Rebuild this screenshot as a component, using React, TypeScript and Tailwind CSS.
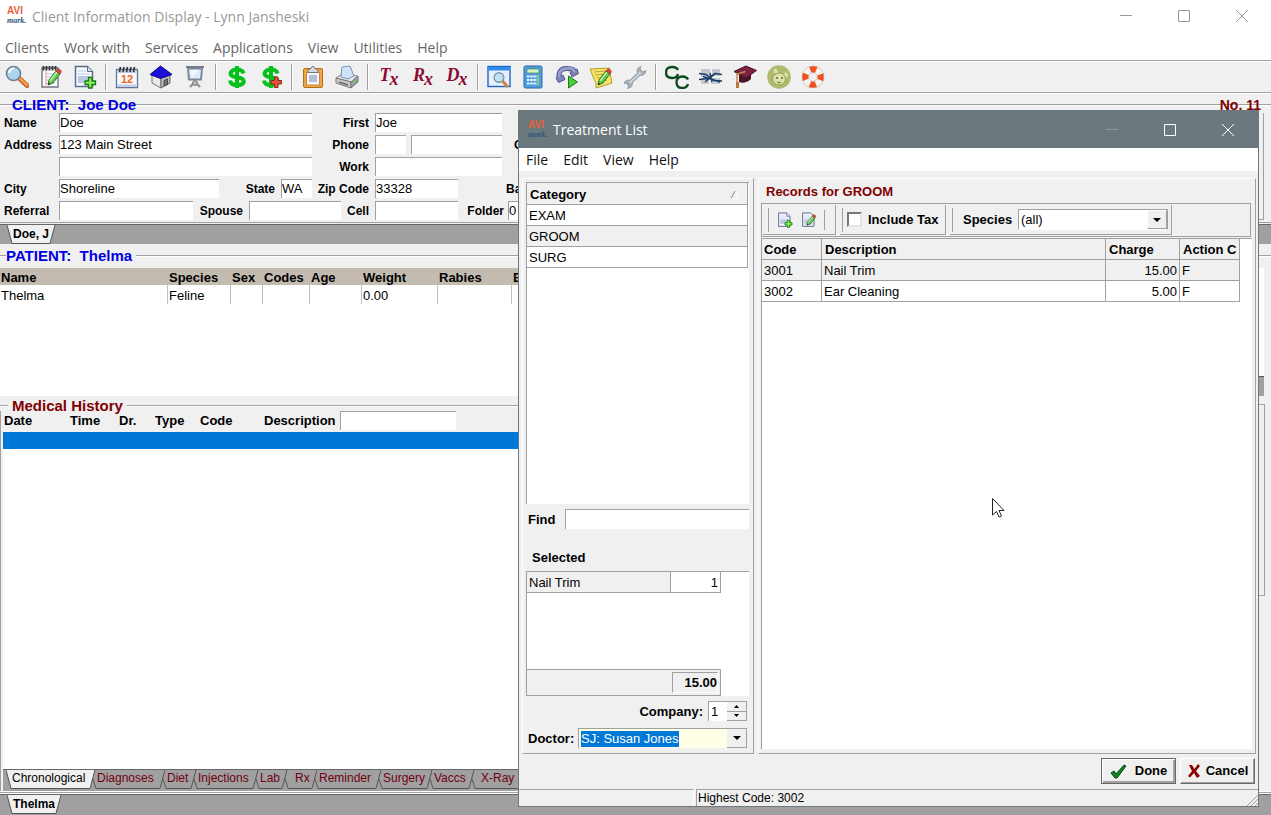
import React from 'react';

const UI = "font-['Open_Sans','Noto_Sans',sans-serif]";
const SUNKEN = 'border-t border-l border-[#a0a0a0] bg-white';
const CELL = 'border-r border-b border-[#a0a0a0] p-0 pt-[2px] leading-[18px]';

const CLIENT_MENU = ['Clients', 'Work with', 'Services', 'Applications', 'View', 'Utilities', 'Help'];
const LIST_MENU = ['File', 'Edit', 'View', 'Help'];

const HISTORY_TABS = [
  { label: 'Diagnoses', width: 'w-[62px]' },
  { label: 'Diet', width: 'w-[23px]' },
  { label: 'Injections', width: 'w-[54px]' },
  { label: 'Lab', width: 'w-[21px]' },
  { label: 'Rx', width: 'w-[22px] pl-[6px]' },
  { label: 'Reminder', width: 'w-[56px]' },
  { label: 'Surgery', width: 'w-[43px]' },
  { label: 'Vaccs', width: 'w-[34px]' },
  { label: 'X-Ray', width: 'w-[48px] pl-[5px]' },
];

const PATIENT_COLUMNS = [
  { head: 'Name', value: 'Thelma', width: 'w-[168px]' },
  { head: 'Species', value: 'Feline', width: 'w-[63px]' },
  { head: 'Sex', value: '', width: 'w-[32px]' },
  { head: 'Codes', value: '', width: 'w-[47px]' },
  { head: 'Age', value: '', width: 'w-[52px]' },
  { head: 'Weight', value: '0.00', width: 'w-[76px]' },
  { head: 'Rabies', value: '', width: 'w-[74px]' },
  { head: 'E', value: '', width: '' },
];

const RECORDS = [
  { code: '3001', description: 'Nail Trim', charge: '15.00', action: 'F' },
  { code: '3002', description: 'Ear Cleaning', charge: '5.00', action: 'F' },
];

const Svg = ({ children, size = 24 }: { children: React.ReactNode; size?: number }) => (
  <svg width={size} height={size} viewBox="0 0 24 24" fill="none" aria-hidden="true" className="shrink-0">
    {children}
  </svg>
);

const Pencil = () => (
  <g>
    <path d="M9 20l1-5 7-9 4 3-7 9z" fill="#63c84a" stroke="#2c7a26" />
    <path d="M11 16l7-9" stroke="#c6f3b0" strokeWidth="1.4" />
    <path d="M17 6l1.500-1.800q3-.8 3.800 2.500L21 9z" fill="#e0453a" stroke="#a52a22" strokeWidth=".7" />
    <path d="M9 20l.5-2.500 2 1.500z" fill="#333" />
  </g>
);

const SearchIcon = () => (
  <Svg>
    <path d="M15 14l7 6.500" stroke="#b8632a" strokeWidth="5" strokeLinecap="round" />
    <path d="M15.500 14l6.500 6" stroke="#f79a4b" strokeWidth="3" strokeLinecap="round" />
    <circle cx="8.500" cy="8.500" r="7" fill="#a9d5ee" stroke="#6b8296" strokeWidth="1.600" />
    <path d="M4 8q1-4.500 5-4.500" stroke="#fff" strokeWidth="2" />
  </Svg>
);

const NotepadIcon = () => (
  <Svg>
    <path d="M3 3h16v19H3z" fill="#fdfdfd" stroke="#6f7484" strokeWidth="1.400" />
    <path d="M6 9h10M6 12h10M6 15h10M6 18h10" stroke="#b9c3e0" />
    <path d="M7 5v17" stroke="#f0a0a0" />
    <path d="M4.500 5.500V1M7.500 5.500V1M10.500 5.500V1M13.500 5.500V1M16.500 5.500V1" stroke="#333" strokeWidth="1.800" />
    <Pencil />
  </Svg>
);

const PageAddIcon = ({ size }: { size?: number }) => (
  <Svg size={size}>
    <path d="M2.500 1.500h12l5 5v15h-17z" fill="#f4f7fc" stroke="#5c6c8a" strokeWidth="1.500" />
    <path d="M14.500 1.500v5h5" fill="#d4dfef" stroke="#5c6c8a" />
    <path d="M5 6h8M5 9h11" stroke="#c2cee2" />
    <path d="M5 11h12v7H5z" fill="#b9c9e4" />
    <path d="M15.500 12.500h3.500v3.500h3.500v3.500H19V23h-3.500v-3.500H12V16h3.500z" fill="#8ef25c" stroke="#157a15" strokeWidth="1.300" />
  </Svg>
);

const PageEditIcon = ({ size }: { size?: number }) => (
  <Svg size={size}>
    <path d="M2.500 1.500h12l5 5v15h-17z" fill="#f4f7fc" stroke="#5c6c8a" strokeWidth="1.500" />
    <path d="M5 6h8M5 9h11" stroke="#c2cee2" />
    <path d="M5 11h12v8H5z" fill="#b9c9e4" />
    <Pencil />
  </Svg>
);

const CalendarIcon = () => (
  <Svg>
    <path d="M1.500 4.500h21v18h-21z" fill="#f7f9fd" stroke="#6672a0" strokeWidth="1.300" />
    <path d="M2 5h20v3H2z" fill="#c4cde4" />
    <path d="M3 20.500h18" stroke="#c4cde4" strokeWidth="2" />
    <path d="M4.500 7l1-5M8 7l1-5M11.500 7l1-5M15 7l1-5M18.500 7l1-5" stroke="#333" strokeWidth="1.700" />
    <text x="12" y="18" textAnchor="middle" fontFamily="Liberation Sans" fontWeight="700" fontSize="11" fill="#f0651c">12</text>
  </Svg>
);

const HouseIcon = () => (
  <Svg>
    <path d="M3 9l9 3v11l-9-5z" fill="#e9e9e9" stroke="#777" />
    <path d="M21 9l-9 3v11l9-5z" fill="#bdbdbd" stroke="#666" />
    <path d="M11.500 1L1 9.500l10.500 4L23 9.500z" fill="#1c10d8" stroke="#0d0784" />
    <path d="M15 15.500l3.500-1.700v5.700L15 21z" fill="#777" stroke="#333" strokeWidth=".8" />
  </Svg>
);

const BoardIcon = () => (
  <Svg>
    <path d="M7 22l5-5 5 5" stroke="#8d9299" strokeWidth="2.400" />
    <path d="M4 2.500h16l-1 13H5z" fill="#7f8899" />
    <path d="M6 4.500h12l-1 9H7z" fill="#dcebfb" />
    <path d="M7 5h9l-7 7z" fill="#f4f9ff" />
    <path d="M3 2h18" stroke="#777d88" strokeWidth="2" />
    <circle cx="12" cy="18" r="2.400" fill="#b6bac2" stroke="#777" />
  </Svg>
);

const DollarShape = () => (
  <path d="M18.500 8.500Q17.500 4.500 12 4.500T5.500 8.500Q5.500 11.500 12 12.300T18.800 16.500Q18.500 20 12 20T5 15.500M12 1v22" stroke="#06c01c" strokeWidth="4" />
);

const DollarIcon = () => (
  <Svg><DollarShape /></Svg>
);

const DollarAddIcon = () => (
  <Svg>
    <DollarShape />
    <path d="M15.500 12h3.500v3.500h3.500V19H19v3.500h-3.500V19H12v-3.500h3.500z" fill="#e3553d" stroke="#8e2415" />
  </Svg>
);

const ClipboardIcon = () => (
  <Svg>
    <rect x="2.500" y="3.500" width="19" height="19" rx="1.500" fill="#f2a444" stroke="#b06f1c" />
    <path d="M5.500 7.500h13v12.500h-13z" fill="#f4f6fb" stroke="#c98b3c" />
    <path d="M8 10h8v7H8z" fill="#b4bedb" />
    <path d="M7 7.500V5l3-1.500q2-4.500 4 0L17 5v2.500z" fill="#d5d8dd" stroke="#777" />
  </Svg>
);

const PrinterIcon = () => (
  <Svg>
    <path d="M1 13l6-4 16 2-7 6z" fill="#e8e8e8" stroke="#8a8a8a" />
    <path d="M6 12L7 2l8-1 4 10-6 3z" fill="#cfe3f8" stroke="#7f93ae" />
    <path d="M1 13v5l15 5v-6z" fill="#c9cbce" stroke="#777" />
    <path d="M16 17v6l7-6v-6z" fill="#9b9ea2" stroke="#777" />
    <path d="M4 17l9 3" stroke="#666" strokeWidth="1.500" />
    <circle cx="19" cy="16" r="1" fill="#5fdc3c" />
  </Svg>
);

const WindowSearchIcon = () => (
  <Svg>
    <rect x="1" y="1.500" width="22" height="20" fill="#e7f1fd" stroke="#1b66c8" strokeWidth="1.400" />
    <path d="M1.500 2h21v3.500h-21z" fill="#3189ea" />
    <path d="M15.500 16l4.500 5" stroke="#d97f2f" strokeWidth="3" strokeLinecap="round" />
    <circle cx="12" cy="12.500" r="4.800" fill="#bfe2f3" stroke="#7d95a6" strokeWidth="1.400" />
  </Svg>
);

const CalculatorIcon = () => (
  <Svg>
    <rect x="3" y="1" width="18" height="22" rx="1.500" fill="#4f9de0" stroke="#2867a8" />
    <path d="M6 4h12v4H6z" fill="#d8f5c0" stroke="#4d8f60" strokeWidth=".8" />
    <path d="M6 11.500h12M6 15h12M6 18.500h12" stroke="#f3f8fd" strokeWidth="2.200" strokeDasharray="2.400 .8" />
    <path d="M16 10.500h2v9h-2z" fill="#75d06c" />
  </Svg>
);

const PhoneIcon = () => (
  <Svg>
    <path d="M4 13Q3 4 11 3.500t9 4" stroke="#51578a" strokeWidth="5" />
    <path d="M1 13l7-3 2 4.500-6.500 3zM15 7.500l7-3.500 1.500 4.500L17 12z" fill="#7e84b8" stroke="#51578a" />
    <path d="M4 12.500Q3 4.500 11 3.500t8 3.500" stroke="#9aa0d0" strokeWidth="3" />
    <path d="M13.500 11l9 6-9 6z" fill="#4cd03a" stroke="#1c7a1b" />
  </Svg>
);

const NoteIcon = () => (
  <Svg>
    <path d="M1 4l19-1 3 15-16 5q1-5-2-9z" fill="#f8e568" stroke="#b89b2b" />
    <path d="M5 7l12-1M6 10l11-1M8 13l10-1M9 17l9-2" stroke="#b39a33" strokeWidth=".9" />
    <Pencil />
  </Svg>
);

const WrenchIcon = () => (
  <Svg>
    <path d="M4.500 20L19 6" stroke="#8e97a5" strokeWidth="4" />
    <path d="M23 5.500l-3.500 1.500L17 5l1-3.500q-4 .5-4 5.500l3.500 3.500q5 0 5.500-5zM1 18.500l3.500-.5L6 20l-1.500 3.500Q9.500 23 9.500 18L6.500 15q-5 0-5.500 3.500z" fill="#a9b1bd" stroke="#8e97a5" strokeWidth=".8" />
    <path d="M6.500 18L17.500 7.500" stroke="#cdd3db" strokeWidth="2.200" />
  </Svg>
);

const CreditIcon = () => (
  <Svg>
    <g stroke="#0d4a22" strokeWidth="2.400">
      <path d="M13 5Q11.500 2 7.500 2 1 2 1 7.500T7.500 13q4.500 0 5.500-4" />
      <path d="M23 14.500q-1.500-3-5.500-3-6 0-6 5.800T17.500 23q4.500 0 5.500-4" />
    </g>
  </Svg>
);

const LinkIcon = () => (
  <Svg>
    <path d="M2 4h9v8H2zM13 4h8v7h-8zM2 13h8v6H2zM12 13h9v6h-9z" fill="#c3c7cf" />
    <path d="M0 8.500l7 1 8 6 8 .5M0 14.500l9-1 7-5 7 1M4 11.500l17 5.500M6 17l11-9M11 8l2 9" stroke="#173c66" strokeWidth="1.400" />
  </Svg>
);

const CapIcon = () => (
  <Svg>
    <path d="M6 10v7q6 2.500 12-3V8z" fill="#4c1428" />
    <path d="M1 6.500L13 1l10.500 4.500L13 13z" fill="#7d2342" stroke="#4a1226" />
    <path d="M12.500 6.500L4 9v13" stroke="#c08a4a" strokeWidth="1.400" />
    <path d="M3 17h3v6H3z" fill="#b9793d" />
  </Svg>
);

const PuppyIcon = () => (
  <Svg>
    <circle cx="12" cy="12" r="11.800" fill="#aebb6c" />
    <path d="M7 8q-1-4 1-4.500T11 8M17 8q4-2 4 3l-2 2" fill="#dde0a8" />
    <ellipse cx="12" cy="14" rx="6.500" ry="6" fill="#dde0a8" stroke="#95a254" />
    <circle cx="10" cy="13" r="1" fill="#66702f" />
    <circle cx="15" cy="13" r="1" fill="#66702f" />
    <path d="M10 17q2 1.500 4 0" stroke="#66702f" />
  </Svg>
);

const LifebuoyIcon = () => (
  <Svg>
    <circle cx="12" cy="12" r="7.700" stroke="#f6f3f0" strokeWidth="6.500" />
    <circle cx="12" cy="12" r="7.700" stroke="#f0521f" strokeWidth="6.500" strokeDasharray="6.047 6.047" strokeDashoffset="3" />
    <circle cx="12" cy="12" r="11" stroke="#c9a79a" strokeWidth=".6" />
    <circle cx="12" cy="12" r="4.400" stroke="#c9a79a" strokeWidth=".6" />
  </Svg>
);

const Script = ({ letter }: { letter: string }) => (
  <span className="flex items-start font-['Liberation_Serif',serif] font-bold italic text-[#8b0a32]">
    <span className="text-[18px] leading-[20px]">{letter}</span>
    <span className="-ml-px pt-1 text-[18px] leading-[20px]">x</span>
  </span>
);

const TOOLBAR = [
  [
    { name: 'Find client', icon: <SearchIcon /> },
    { name: 'Edit notes', icon: <NotepadIcon /> },
    { name: 'New client', icon: <PageAddIcon /> },
  ],
  [
    { name: 'Appointments', icon: <CalendarIcon /> },
    { name: 'Boarding', icon: <HouseIcon /> },
    { name: 'Whiteboard', icon: <BoardIcon /> },
  ],
  [
    { name: 'Accounting', icon: <DollarIcon /> },
    { name: 'Add payment', icon: <DollarAddIcon /> },
  ],
  [
    { name: 'Clipboard', icon: <ClipboardIcon /> },
    { name: 'Print', icon: <PrinterIcon /> },
  ],
  [
    { name: 'Treatments', icon: <Script letter="T" /> },
    { name: 'Prescriptions', icon: <Script letter="R" /> },
    { name: 'Diagnoses', icon: <Script letter="D" /> },
  ],
  [
    { name: 'Information search', icon: <WindowSearchIcon /> },
    { name: 'Calculator', icon: <CalculatorIcon /> },
    { name: 'Call', icon: <PhoneIcon /> },
    { name: 'Memo', icon: <NoteIcon /> },
    { name: 'Setup', icon: <WrenchIcon /> },
  ],
  [
    { name: 'Credit card', icon: <CreditIcon /> },
    { name: 'Links', icon: <LinkIcon /> },
    { name: 'Training', icon: <CapIcon /> },
    { name: 'Pet portal', icon: <PuppyIcon /> },
    { name: 'Support', icon: <LifebuoyIcon /> },
  ],
];

const Logo = () => (
  <svg width="20" height="20" viewBox="0 0 20 20" aria-hidden="true" className="shrink-0">
    <text x="0" y="8" fontFamily="Liberation Sans" fontWeight="700" fontSize="10" fill="#e8623c">AVI</text>
    <text x="0" y="17" fontFamily="Liberation Serif" fontWeight="700" fontStyle="italic" fontSize="8" fill="#2d5578">mark.</text>
  </svg>
);

const WindowButtons = ({ minimize }: { minimize: string }) => (
  <div className="flex h-full">
    <button aria-label="Minimize" className={`flex w-[58px] items-center justify-center ${minimize}`}>
      <svg width="12" height="12" stroke="currentColor"><path d="M0 5.500h12" /></svg>
    </button>
    <button aria-label="Maximize" className="flex w-[58px] items-center justify-center">
      <svg width="12" height="12" stroke="currentColor" fill="none"><path d="M.5.500h11v11H.5z" /></svg>
    </button>
    <button aria-label="Close" className="flex w-[58px] items-center justify-center">
      <svg width="12" height="12" stroke="currentColor"><path d="M0 0l12 12M12 0L0 12" /></svg>
    </button>
  </div>
);

type FieldProps = { id: string; label: string; labelWidth: string; width: string; value?: string };

const Field = ({ id, label, labelWidth, width, value = '' }: FieldProps) => (
  <>
    <label htmlFor={id} className={`shrink-0 text-[12px] font-bold whitespace-nowrap ${labelWidth}`}>{label}</label>
    <input id={id} defaultValue={value} className={`h-[19px] shrink-0 text-[13px] ${SUNKEN} ${width}`} />
  </>
);

const Legend = ({ title, color, right }: { title: string; color: string; right?: string }) => (
  <div className="grid h-4 items-center">
    <div className="col-start-1 row-start-1 h-[2px] border-t border-[#a0a0a0] bg-white" />
    <div className="col-start-1 row-start-1 flex justify-between pr-[10px] pl-3 text-[15px] leading-4 font-bold">
      <h2 className={`whitespace-pre ${color}`}>{title}</h2>
      {right && <span className="text-[14px] text-[#800000]">{right}</span>}
    </div>
  </div>
);

// Slanted edges of the notebook tabs
const TabLeft = () => (
  <svg width="6" height="19" className="shrink-0" fill="none">
    <path d="M0 0l5 18h1V0z" fill="#f0f0f0" />
    <path d="M0 0l5 18.500h1" stroke="#555" />
  </svg>
);

const TabRight = ({ filled, last }: { filled?: boolean; last?: boolean }) => (
  <svg width="8" height="19" className="shrink-0" fill="none">
    {filled && <path d="M0 0h6L1 18H0z" fill="#f0f0f0" />}
    <path d="M0 18.500h1L6 0" stroke="#555" />
    {!last && <path d="M4 9l3 9.500h1" stroke="#555" />}
  </svg>
);

const SingleTab = ({ label, className }: { label: string; className: string }) => (
  <div className={`flex border-t border-[#666] bg-[#a0a0a0] pl-[7px] ${className}`}>
    <TabLeft />
    <button className="h-[19px] border-b border-[#555] bg-[#f0f0f0] text-[12px] leading-[17px] font-bold">{label}</button>
    <TabRight filled last />
  </div>
);

const DownArrow = () => (
  <svg width="8" height="4" aria-hidden="true"><path d="M0 0h8L4 4z" fill="#000" /></svg>
);

const ClientPanel = () => (
  <section className="border-t border-white pt-[3px]">
    <Legend title="CLIENT:  Joe Doe" color="text-[#0000e0]" right="No. 11" />
    <div className="flex justify-between border-b border-[#a0a0a0] pr-[7px] pb-[2px]">
      <form className="flex flex-col gap-[3px] pl-1">
        <div className="flex items-center">
          <Field id="name" label="Name" labelWidth="w-[55px]" width="w-[253px]" value="Doe" />
          <Field id="first" label="First" labelWidth="w-[63px] pr-[6px] text-right" width="w-[127px]" value="Joe" />
        </div>
        <div className="flex items-center">
          <Field id="address" label="Address" labelWidth="w-[55px]" width="w-[253px]" value="123 Main Street" />
          <Field id="area" label="Phone" labelWidth="w-[63px] pr-[6px] text-right" width="w-[31px]" />
          <input aria-label="Phone number" className={`ml-[5px] h-[19px] w-[91px] ${SUNKEN}`} />
          <span className="pl-3 text-[12px] font-bold">C</span>
        </div>
        <div className="flex items-center">
          <Field id="address2" label="" labelWidth="w-[55px]" width="w-[253px]" />
          <Field id="work" label="Work" labelWidth="w-[63px] pr-[6px] text-right" width="w-[127px]" />
        </div>
        <div className="flex items-center">
          <Field id="city" label="City" labelWidth="w-[55px]" width="w-[160px]" value="Shoreline" />
          <Field id="state" label="State" labelWidth="w-[62px] pr-[6px] text-right" width="w-[31px]" value="WA" />
          <Field id="zip" label="Zip Code" labelWidth="w-[63px] pr-[6px] text-right" width="w-[83px]" value="33328" />
          <span className="pl-12 text-[12px] font-bold">Ba</span>
        </div>
        <div className="flex items-center">
          <Field id="referral" label="Referral" labelWidth="w-[55px]" width="w-[134px]" />
          <Field id="spouse" label="Spouse" labelWidth="w-[56px] pr-[6px] text-right" width="w-[92px]" />
          <Field id="cell" label="Cell" labelWidth="w-[34px] pr-[6px] text-right" width="w-[83px]" />
          <Field id="folder" label="Folder" labelWidth="w-[50px] pr-[4px] text-right" width="w-[60px]" value="0" />
        </div>
      </form>
      <div className="w-[300px] border-r border-b border-[#a0a0a0]" />
    </div>
    <SingleTab label="Doe, J" className="mt-px h-5" />
  </section>
);

const PatientPanel = () => (
  <section>
    <div className="flex h-6 items-center text-[15px] leading-6 font-bold">
      <div className="h-[2px] w-[6px] border-t border-[#a0a0a0] bg-white" />
      <h2 className="pr-1 whitespace-pre text-[#0000e0]">PATIENT:  Thelma</h2>
      <div className="h-[2px] flex-1 border-t border-[#a0a0a0] bg-white" />
    </div>
    <div className="mr-[7px] flex h-32 bg-white">
      <div className="flex-1">
        <table className="w-full table-fixed border-separate border-spacing-0 text-left text-[13px]">
          <thead>
            <tr className="h-[17px] bg-[#c4bbb0]">
              {PATIENT_COLUMNS.map((col) => (
                <th key={col.head} className={`p-0 pt-[2px] pl-px leading-[15px] ${col.width}`}>{col.head}</th>
              ))}
            </tr>
          </thead>
          <tbody>
            <tr className="h-[19px]">
              {PATIENT_COLUMNS.map((col) => (
                <td key={col.head} className="border-r border-[#c0c0c0] p-0 pt-[2px] pl-px leading-[17px] last:border-r-0">{col.value}</td>
              ))}
            </tr>
          </tbody>
        </table>
      </div>
      <div className="flex w-[300px] flex-col">
        <div className="flex-1" />
        <div className="h-5 border-t border-[#555] bg-[#a0a0a0]" />
      </div>
    </div>
  </section>
);

const HistoryPanel = () => (
  <section className="flex flex-1 gap-3 pt-1 pr-[6px]">
    <div className="flex flex-1 flex-col">
      <div className="flex h-[11px] items-center text-[15px] leading-3 font-bold">
        <div className="h-[2px] w-2 border-t border-[#a0a0a0] bg-white" />
        <h2 className="px-1 text-[#800000]">Medical History</h2>
        <div className="h-[2px] flex-1 border-t border-[#a0a0a0] bg-white" />
      </div>
      <div className="flex flex-1 flex-col border-l border-[#a0a0a0] pl-[2px]">
        <div className="flex h-[19px] items-center text-[13px] font-bold">
          <span className="w-[66px] pl-px">Date</span>
          <span className="w-[49px] pl-px">Time</span>
          <span className="w-[37px] pl-px">Dr.</span>
          <span className="w-[45px]">Type</span>
          <span className="w-[64px]">Code</span>
          <label htmlFor="history-description" className="w-[76px]">Description</label>
          <input id="history-description" className={`h-[19px] w-[116px] ${SUNKEN}`} />
        </div>
        <div className="mt-[2px] h-[17px] bg-[#0078d7]" />
        <div className="flex-1 bg-white" />
        <div className="flex h-[22px] overflow-hidden border-t border-[#666] bg-[#a0a0a0] pl-[3px] text-[12px]">
          <TabLeft />
          <button className="flex h-[19px] w-[77px] shrink-0 border-b border-[#555] bg-[#f0f0f0] leading-4 whitespace-nowrap">
            Chronological
          </button>
          <TabRight filled />
          {HISTORY_TABS.map((tab) => (
            <React.Fragment key={tab.label}>
              <button className={`flex h-[19px] shrink-0 border-b border-[#555] leading-4 whitespace-nowrap text-[#700010] ${tab.width}`}>
                {tab.label}
              </button>
              <TabRight />
            </React.Fragment>
          ))}
        </div>
      </div>
    </div>
    <div className="mt-1 h-[192px] w-[300px] border border-[#a0a0a0]" />
  </section>
);

const CategoryPanel = () => (
  <div className="flex w-[232px] shrink-0 flex-col border border-t-white border-r-[#a0a0a0] border-b-[#a0a0a0] border-l-white pt-[3px] pr-1 pl-[3px]">
    <div className={`flex-1 ${SUNKEN}`}>
      <table className="w-[221px] border-separate border-spacing-0 text-left text-[13px]">
        <thead>
          <tr className="h-[22px] bg-[#f0f0f0]">
            <th className={CELL}>
              <span className="flex items-center justify-between pr-2 pl-[3px]">
                Category
                <svg width="8" height="8" aria-hidden="true" fill="none">
                  <path d="M4.500 0L8 7.500H0" stroke="#fff" />
                  <path d="M0 7.500L4 0" stroke="#888" />
                </svg>
              </span>
            </th>
          </tr>
        </thead>
        <tbody>
          {['EXAM', 'GROOM', 'SURG'].map((name) => (
            <tr key={name} className="h-[21px] even:bg-[#f0f0f0]">
              <td className={`pl-[2px] ${CELL}`}>{name}</td>
            </tr>
          ))}
        </tbody>
      </table>
    </div>
    <div className="mt-[5px] flex h-5 items-center text-[13px] leading-[18px] font-bold">
      <label htmlFor="find" className="w-[39px] pt-[2px] pl-[2px]">Find</label>
      <input id="find" className={`h-5 min-w-0 flex-1 ${SUNKEN}`} />
    </div>
    <h3 className="mt-4 h-[26px] pl-[6px] text-[13px] leading-[26px] font-bold">Selected</h3>
    <div className={`flex h-[125px] flex-col items-start text-[13px] ${SUNKEN}`}>
      <table className="w-[194px] border-separate border-spacing-0">
        <tbody>
          <tr className="h-[21px]">
            <td className={`bg-[#f0f0f0] pl-[2px] ${CELL}`}>Nail Trim</td>
            <td className={`w-[50px] pr-[2px] text-right ${CELL}`}>1</td>
          </tr>
        </tbody>
      </table>
      <div className="mt-auto flex h-[27px] w-[194px] justify-end border-t border-r border-b border-[#a0a0a0] bg-[#f0f0f0] p-[2px]">
        <output className="w-[46px] border border-t-[#a0a0a0] border-r-white border-b-white border-l-[#a0a0a0] text-right leading-5 font-bold">15.00</output>
      </div>
    </div>
    <div className="mt-[5px] mr-[2px] flex h-5 items-center justify-end text-[13px] leading-[18px]">
      <label htmlFor="company" className="pt-px pr-[5px] font-bold">Company:</label>
      <input id="company" defaultValue="1" className={`h-5 w-[19px] pl-[2px] ${SUNKEN}`} />
      <div className="flex h-5 w-5 flex-col border-t border-[#a0a0a0]">
        <button aria-label="Increase" className="flex flex-1 items-center justify-center border-r border-b border-[#a0a0a0]">
          <svg width="5" height="3"><path d="M0 3h5L2.500 0z" fill="#000" /></svg>
        </button>
        <button aria-label="Decrease" className="flex flex-1 items-center justify-center border-r border-b border-[#a0a0a0]">
          <svg width="5" height="3"><path d="M0 0h5L2.500 3z" fill="#000" /></svg>
        </button>
      </div>
    </div>
    <div className="mt-[7px] mr-[2px] mb-[5px] flex h-5 items-center text-[13px] leading-[18px]">
      <label htmlFor="doctor" className="w-[52px] pt-px pl-[2px] font-bold whitespace-nowrap">Doctor:</label>
      <div className="flex h-5 flex-1 items-center justify-between border-t border-l border-[#a0a0a0] bg-[#ffffe6] pl-[2px]">
        <select id="doctor" className="h-4 appearance-none bg-[#0078d7] leading-4 text-white">
          <option>SJ: Susan Jones</option>
        </select>
        <span className="flex h-full w-5 items-center justify-center border-r border-b border-[#a0a0a0] bg-[#f0f0f0]"><DownArrow /></span>
      </div>
    </div>
  </div>
);

const RecordsPanel = () => (
  <div className="flex min-w-0 flex-1 flex-col border border-t-white border-r-[#a0a0a0] border-b-[#a0a0a0] border-l-white pr-[3px] pb-1 pl-[2px] text-[13px]">
    <h3 className="h-6 pt-[2px] pl-[5px] leading-[22px] font-bold text-[#800000]">Records for GROOM</h3>
    <div className="mr-px flex h-[34px] items-stretch gap-[4px] border border-[#a0a0a0] p-px">
      <div className="flex w-[73px] items-center gap-1 border-r border-b border-[#a0a0a0] pr-[10px] pl-[5px]">
        <div className="h-6 border-l border-[#a0a0a0]" />
        <button aria-label="New treatment" className="flex w-5 justify-end"><PageAddIcon size={16} /></button>
        <button aria-label="Edit treatment" className="flex w-5 justify-end"><PageEditIcon size={16} /></button>
        <div className="ml-auto h-5 border-l border-[#a0a0a0]" />
      </div>
      <div className="flex w-[106px] shrink-0 items-center border-r border-b border-[#a0a0a0] pl-[2px]">
        <div className="h-6 border-l border-[#a0a0a0]" />
        <input
          id="tax"
          type="checkbox"
          className="ml-[4px] h-[15px] w-[15px] appearance-none border-2 border-t-[#777] border-r-[#e3e3e3] border-b-[#e3e3e3] border-l-[#777] bg-white"
        />
        <label htmlFor="tax" className="pl-[6px] font-bold whitespace-nowrap">Include Tax</label>
      </div>
      <div className="flex w-[222px] shrink-0 items-center border-r border-b border-[#a0a0a0] pl-[2px]">
        <div className="h-6 border-l border-[#a0a0a0]" />
        <label htmlFor="species" className="w-[65px] pl-[10px] font-bold">Species</label>
        <div className="flex h-[21px] w-[150px] items-center border border-t-[#a0a0a0] border-r-[#a0a0a0] border-b-white border-l-[#a0a0a0] bg-white">
          <select id="species" className="h-5 flex-1 appearance-none pl-[2px]">
            <option>(all)</option>
          </select>
          <span className="flex h-full w-5 items-center justify-center border border-t-white border-r-[#a0a0a0] border-b-[#a0a0a0] border-l-white bg-[#f0f0f0]"><DownArrow /></span>
        </div>
      </div>
    </div>
    <div className={`mt-px flex-1 pr-3 ${SUNKEN}`}>
      <table className="w-full table-fixed border-separate border-spacing-0">
        <thead>
          <tr className="h-[21px] bg-[#f0f0f0] text-left">
            <th className={`w-[60px] pl-[2px] ${CELL}`}>Code</th>
            <th className={`pl-[3px] ${CELL}`}>Description</th>
            <th className={`w-[74px] pl-[3px] ${CELL}`}>Charge</th>
            <th className={`w-[60px] overflow-hidden pl-[3px] whitespace-nowrap ${CELL}`}>Action C</th>
          </tr>
        </thead>
        <tbody>
          {RECORDS.map((row) => (
            <tr key={row.code} className="h-[21px] odd:bg-[#f0f0f0]">
              <td className={`pl-[2px] ${CELL}`}>{row.code}</td>
              <td className={`pl-[2px] ${CELL}`}>{row.description}</td>
              <td className={`pr-[2px] text-right ${CELL}`}>{row.charge}</td>
              <td className={`pl-[2px] ${CELL}`}>{row.action}</td>
            </tr>
          ))}
        </tbody>
      </table>
    </div>
  </div>
);

const TreatmentList = () => (
  <div role="dialog" aria-label="Treatment List" className="absolute top-[110px] right-3 bottom-2 left-[518px] flex flex-col border border-[#6b797e] bg-[#f0f0f0]">
    <div className={`flex h-[37px] shrink-0 items-center justify-between bg-[#6b797e] pr-px pl-[9px] text-white ${UI}`}>
      <div className="flex items-center gap-[5px]">
        <Logo />
        <h1 className="text-[14px]">Treatment List</h1>
      </div>
      <WindowButtons minimize="text-[#8d9a9e]" />
    </div>
    <nav className={`flex h-[23px] shrink-0 items-center gap-[15px] bg-white pl-[7px] text-[14px] text-[#111] ${UI}`}>
      {LIST_MENU.map((item) => (
        <button key={item}>{item}</button>
      ))}
    </nav>
    <div className="flex flex-1 gap-1 pt-[7px] pr-[2px] pl-[3px]">
      <CategoryPanel />
      <RecordsPanel />
    </div>
    <div className="flex justify-end gap-1 pt-1 pr-[3px] pb-[5px] text-[13px] font-bold">
      <button className="flex h-[26px] w-[75px] items-center justify-center gap-2 border border-[#696969] shadow-[inset_1px_1px_0_#fff,inset_-2px_-2px_0_#a0a0a0]">
        <svg width="17" height="15" aria-hidden="true"><path d="M1 9l3-2 2 3 8-9 2 1-9 12H5z" fill="#0a8a1c" stroke="#0b3f14" /></svg>
        Done
      </button>
      <button className="flex h-[26px] w-[75px] items-center justify-center gap-[5px] border border-t-white border-r-[#696969] border-b-[#696969] border-l-white shadow-[inset_-1px_-1px_0_#a0a0a0]">
        <svg width="14" height="14" aria-hidden="true"><path d="M2 1l3 0 2.500 4L11 0l2 2-4 5 4 5-3 2-3-5-4 4.500L1 12l4-5z" fill="#8b0000" /></svg>
        Cancel
      </button>
    </div>
    <div className="flex h-[17px] gap-[2px] text-[12px]">
      <div className="w-[175px] border-t border-r border-t-[#a0a0a0] border-r-white" />
      <div className="flex flex-1 items-center justify-between border-t border-l border-[#a0a0a0] pl-px">
        <span>Highest Code: 3002</span>
        <svg width="12" height="12" stroke="#a0a0a0" className="self-end"><path d="M1 12L12 1M5 12l7-7M9 12l3-3" /></svg>
      </div>
    </div>
  </div>
);

export default function App() {
  return (
    <main className="relative flex min-h-screen flex-col overflow-hidden bg-[#f0f0f0] font-['Liberation_Sans',Arial,sans-serif] text-black">
      <header className={`h-[34px] bg-white ${UI}`}>
        <div className="flex h-8 items-center justify-between pl-[7px] text-[#999]">
          <div className="flex items-center gap-[5px]">
            <Logo />
            <h1 className="text-[14px]">Client Information Display - Lynn Jansheski</h1>
          </div>
          <WindowButtons minimize="" />
        </div>
      </header>
      <nav className={`flex h-[26px] items-center gap-[15px] bg-white pl-[5px] text-[14px] text-[#666] ${UI}`}>
        {CLIENT_MENU.map((item) => (
          <button key={item}>{item}</button>
        ))}
      </nav>
      <div className="flex h-[33px] items-center border-y border-[#a0a0a0] shadow-[inset_0_1px_0_#fff]">
        {TOOLBAR.map((group, i) => (
          <div key={i} className="flex items-center">
            {i > 0 && <div className="mx-[3px] h-[26px] w-[2px] border-l border-[#a0a0a0] bg-white" />}
            {group.map((tool) => (
              <button key={tool.name} aria-label={tool.name} title={tool.name} className="flex h-7 w-[34px] items-center justify-center">
                {tool.icon}
              </button>
            ))}
          </div>
        ))}
      </div>
      <ClientPanel />
      <PatientPanel />
      <HistoryPanel />
      <div className="h-[3px] border-y border-white bg-[#a0a0a0]" />
      <SingleTab label="Thelma" className="h-[21px]" />
      <TreatmentList />
      <svg width="13" height="20" viewBox="0 0 13 20" aria-hidden="true" className="pointer-events-none absolute top-[498px] left-[992px]">
        <path d="M.5.500v16.500l4-3.500 2.500 5.500 2.500-1-2.500-5.500h5z" fill="#fff" stroke="#222" />
      </svg>
    </main>
  );
}
